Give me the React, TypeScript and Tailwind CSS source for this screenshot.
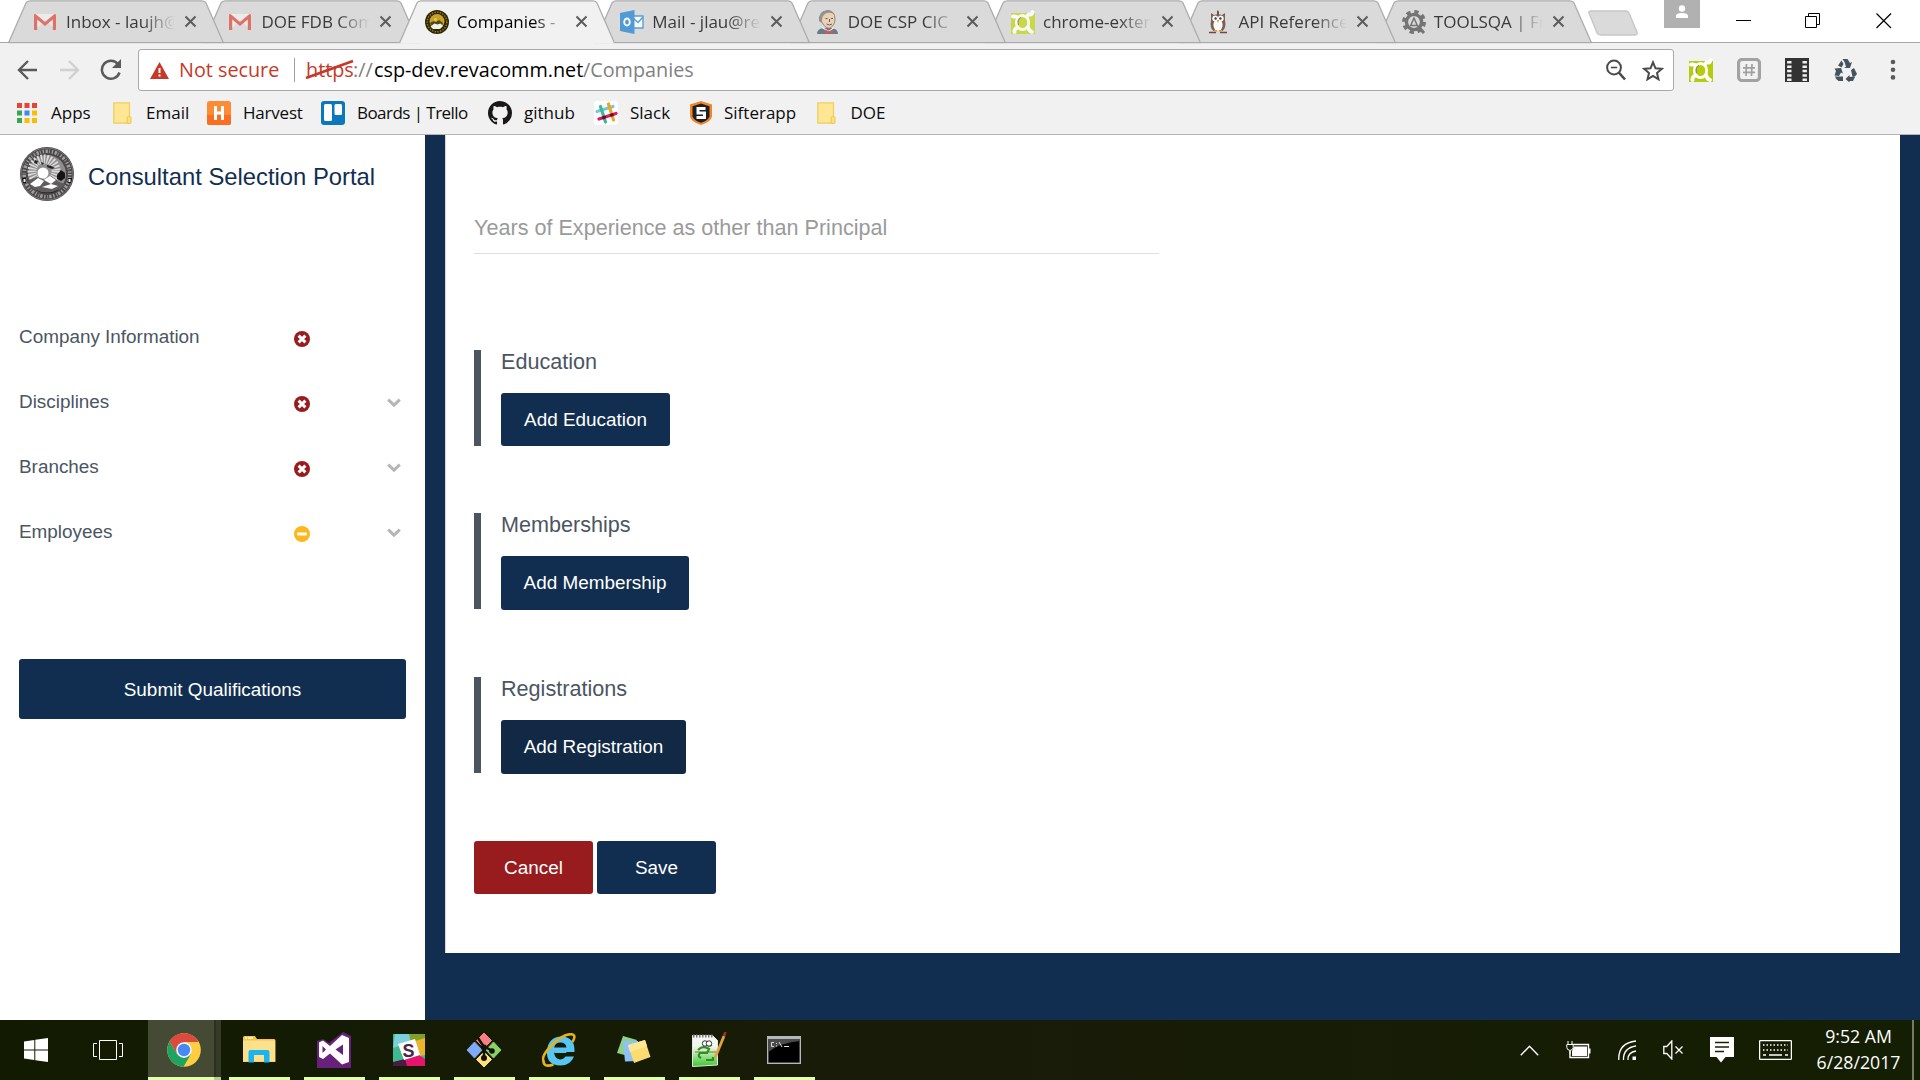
import type { ReactNode } from "react";

/* ---------- tab icons ---------- */

const Gmail = () => (
  <svg width="24" height="24" viewBox="0 0 24 24">
    <path d="M1 4h21v16H1z" fill="#efefef" />
    <path d="M3 18l8.500-8 8.500 8v2H3z" fill="#dcdcdc" />
    <path d="M0 20V5q0-1 1.500-1L11 12 20.500 4Q22 4 22 5v15h-3.200V9.500L11 16 3.200 9.500V20z" fill="#e06055" />
  </svg>
);

const Seal = () => (
  <svg width="24" height="24" viewBox="0 0 24 24">
    <circle cx="12" cy="12" r="12" fill="#2c2608" />
    <circle cx="12" cy="12" r="9.800" fill="none" stroke="#8d7a1c" strokeWidth="1.500" strokeDasharray="1.500 1.200" />
    <circle cx="12" cy="11.500" r="7.500" fill="#c9a227" />
    <path d="M5 13q3-3 6-1l3-2 4 3-2 5H8z" fill="#4e4a1a" />
    <path d="M5.500 16.500l4-3 3 1 3-1 2.500 2.500-3 3H8z" fill="#f2f2ea" />
    <circle cx="10.500" cy="9.500" r="1.500" fill="#e8c84a" />
  </svg>
);

const Outlook = () => (
  <svg width="24" height="24" viewBox="0 0 24 24">
    <path d="M13 6h10v12H13z" fill="#fff" stroke="#3f97d9" strokeWidth="1.400" />
    <path d="M13 8l5 4.500L23 7" fill="none" stroke="#3f97d9" strokeWidth="1.500" />
    <path d="M0 3L14.500 0v24L0 21z" fill="#3a8fd6" />
    <ellipse cx="7" cy="12" rx="2.800" ry="3.500" fill="none" stroke="#fff" strokeWidth="1.900" />
  </svg>
);

const Jenkins = () => (
  <svg width="24" height="24" viewBox="0 0 24 24">
    <path d="M1 24q0-5 6-6h9q6 1 6 6z" fill="#56697a" />
    <path d="M5 9q0-8 7-8.500 7 .5 7 8.500 0 7-6 9.500-7-2.500-8-9.500z" fill="#eccfb2" stroke="#6b5a4e" strokeWidth=".8" />
    <path d="M3 11Q2 1 11 .5q5 0 7 3.500-5-2-8.500-.5Q6.500 5.500 6 9l-.500 4z" fill="#8a8580" />
    <path d="M9.500 8.500h2M15 8.500h2M10.500 14q3 2 5.500 0M13.500 9v3" stroke="#5c4438" strokeWidth="1" fill="none" />
    <path d="M6 17.500l7 4 5-4" fill="none" stroke="#f5f5f5" strokeWidth="1.200" />
    <path d="M9 19.500l4 1.700 4-1.700v4.500l-4-1.500-4 1.500z" fill="#d2413b" />
  </svg>
);

const LimeFrame = ({ fill }: { fill: string }) => (
  <svg width="24" height="24" viewBox="0 0 24 24">
    <path d="M0 3h24v21H0z" fill={fill} />
    <path d="M0 1h24v2.500H0z" fill="none" />
    <path d="M2 6.500Q6 6 8 9M15.500 7.500Q17 4 19 4.500T21.500 2M3.500 22Q3 19 6.500 17.500M21 22Q18 21 17 17" fill="none" stroke="#fff" strokeWidth="3.800" strokeLinecap="round" />
    <ellipse cx="11.500" cy="12.500" rx="6.200" ry="7" fill={fill} stroke="#fff" strokeWidth="2.800" />
    <path d="M7.500 15Q6 9.500 10 7.500" fill="none" stroke="#8c8c50" strokeWidth="1.300" />
  </svg>
);

const Owl = () => (
  <svg width="24" height="24" viewBox="0 0 24 24">
    <path d="M11 0l1.500 1.500L13 0v5h-2z" fill="#5b4334" />
    <path d="M5 3l3 2q4-1.500 8 0l3-2v7q1.500 8-2.500 11h-9Q3.500 18 5 10z" fill="#6b4a3a" />
    <ellipse cx="12" cy="15" rx="4.600" ry="6" fill="#fff" />
    <circle cx="9.200" cy="8.500" r="2.900" fill="#fff" />
    <circle cx="14.800" cy="8.500" r="2.900" fill="#fff" />
    <circle cx="9.600" cy="8.500" r="1.200" fill="#222" />
    <circle cx="14.400" cy="8.500" r="1.200" fill="#222" />
    <path d="M10.800 10h2.400L12 13z" fill="#f08a24" />
    <path d="M3 22.500h7M14 22.500h7" stroke="#4a3a30" strokeWidth="1.600" />
    <path d="M8 20.800h3M13 20.800h3" stroke="#f08a24" strokeWidth="1.800" />
  </svg>
);

const GearA = () => (
  <svg width="24" height="24" viewBox="0 0 24 24">
    <circle cx="12" cy="12" r="10.300" fill="none" stroke="#636363" strokeWidth="3.400" strokeDasharray="4.300 3.790" />
    <circle cx="12" cy="12" r="7.600" fill="none" stroke="#636363" strokeWidth="3.400" />
    <path d="M12 8l-3.300 7.500h6.600z" fill="none" stroke="#636363" strokeWidth="1.500" />
    <path d="M16 16l6 7" stroke="#636363" strokeWidth="3" />
  </svg>
);

type TabInfo = { title: string; icon: ReactNode; layer: string; active?: boolean };

/* Each tab overlaps the one to its right; the active one covers both neighbours. */
const tabs: TabInfo[] = [
  { title: "Inbox - laujh@", icon: <Gmail />, layer: "z-[8]" },
  { title: "DOE FDB Com", icon: <Gmail />, layer: "z-[7]" },
  { title: "Companies -", icon: <Seal />, layer: "z-[9]", active: true },
  { title: "Mail - jlau@re", icon: <Outlook />, layer: "z-[5]" },
  { title: "DOE CSP CIC", icon: <Jenkins />, layer: "z-[4]" },
  { title: "chrome-exten", icon: <LimeFrame fill="#c6d92c" />, layer: "z-[3]" },
  { title: "API Reference", icon: <Owl />, layer: "z-[2]" },
  { title: "TOOLSQA | Fr", icon: <GearA />, layer: "z-[1]" },
];

const Tab = ({ title, icon, layer, active }: TabInfo) => (
  <div className={`relative -mr-[20.600px] flex h-[43px] w-[216px] shrink-0 items-center pl-[26px] ${layer}`}>
    <svg className="absolute inset-0" width="216" height="44" viewBox="0 0 216 44">
      <path d="M0 43.500L18 3Q19 .8 22 .8H194Q197 .8 198 3L216 43.500z" fill={active ? "#f1f1f1" : "#dadada"} />
      <path d="M.5 43L18 3Q19 .8 22 .8H194Q197 .8 198 3L215.500 43" fill="none" stroke="#adadad" strokeWidth="1.300" />
      {!active && <path d="M0 42.500h216" stroke="#a8a8a8" />}
    </svg>
    <span className={`relative mr-2 flex w-6 shrink-0 ${active ? "" : "opacity-85"}`}>{icon}</span>
    <span
      className={`relative w-[112px] overflow-hidden whitespace-nowrap text-[17px] leading-6 [mask-image:linear-gradient(to_right,black_68%,transparent_97%)] ${active ? "text-black" : "text-[#3a3a3a]"}`}
    >
      {title}
    </span>
    <svg className="relative ml-[6px] shrink-0" width="13" height="13" viewBox="0 0 13 13">
      <path d="M1.500 1.500l10 10M11.500 1.500l-10 10" stroke="#5c5c5c" strokeWidth="2" />
    </svg>
  </div>
);

const TabStrip = () => (
  <div className="flex h-[43px] justify-between border-b border-[#a8a8a8] bg-white">
    <div className="isolate flex pl-2">
      {tabs.map((t, i) => (
        <Tab key={i} {...t} />
      ))}
      <svg className="mt-[10px] ml-[15.500px] shrink-0" width="53" height="26" viewBox="0 0 53 26">
        <path d="M2 3Q1 1 4 1H38Q41 1 42 3L50 22Q51 25 48 25H14Q11 25 10 23z" fill="#dadada" stroke="#c6c6c6" strokeWidth="1.300" />
      </svg>
    </div>
    <div className="flex">
      <div className="flex h-7 w-9 justify-center bg-[#b1b1b1]">
        <svg className="mt-[5px]" width="14" height="14" viewBox="0 0 14 14" fill="#fff">
          <circle cx="7" cy="3.500" r="3.200" />
          <path d="M1 13v-2q0-3 6-3t6 3v2z" />
        </svg>
      </div>
      <svg className="ml-9" width="16" height="42" viewBox="0 0 16 42">
        <path d="M0 20.500h15" stroke="#000" />
      </svg>
      <svg className="ml-[53px]" width="16" height="42" viewBox="0 0 16 42" fill="none" stroke="#000">
        <path d="M.5 16.500h11v11H.5zM3.500 16.500v-3h11v11h-3" />
      </svg>
      <svg className="mr-7 ml-[55px]" width="16" height="42" viewBox="0 0 16 42">
        <path d="M.5 13.500l14.500 14.500M15 13.500L.5 28" stroke="#000" strokeWidth="1.200" />
      </svg>
    </div>
  </div>
);

/* ---------- toolbar ---------- */

const Toolbar = () => (
  <div className="flex h-[54px] items-center">
    <svg className="ml-[17px]" width="21" height="22" viewBox="0 0 21 22" fill="none" stroke="#5a5a5a" strokeWidth="2.400">
      <path d="M20 11H2M11 2l-9 9 9 9" />
    </svg>
    <svg className="ml-[21px]" width="21" height="22" viewBox="0 0 21 22" fill="none" stroke="#d0d0d0" strokeWidth="2.400">
      <path d="M1 11h18M10 2l9 9-9 9" />
    </svg>
    <svg className="ml-[20px]" width="22" height="22" viewBox="0 0 22 22">
      <path d="M18 5.200A9 9 0 1 0 19.500 13.500" fill="none" stroke="#5a5a5a" strokeWidth="2.500" />
      <path d="M21 0v9h-9z" fill="#5a5a5a" />
    </svg>
    <div className="ml-[16px] flex h-[42px] w-[1536px] items-center rounded-[3px] border border-[#a9a9a9] bg-white text-[19.800px] whitespace-nowrap">
      <svg className="ml-[11px]" width="19" height="17" viewBox="0 0 19 17">
        <path d="M9.500 0L19 17H0z" fill="#c53929" />
        <path d="M9.500 6v5M9.500 12.500v2" stroke="#fff" strokeWidth="2" />
      </svg>
      <span className="ml-[10px] w-[115px] shrink-0 text-[#c53929]">Not secure</span>
      <span className="mr-[11px] h-6 w-px bg-[#a0a0a0]" />
      <span className="flex">
        <span className="relative w-[47px] text-[#c53929]">
          https
          <svg className="absolute top-[4px] -left-px" width="50" height="22" viewBox="0 0 50 22">
            <path d="M1 19L48 2" stroke="#c53929" strokeWidth="2.800" />
          </svg>
        </span>
        <span className="w-[21px] text-[#808080]">://</span>
        <span className="w-[209px] text-black">csp-dev.revacomm.net</span>
        <span className="text-[#808080]">/Companies</span>
      </span>
      <svg className="ml-auto" width="20" height="22" viewBox="0 0 20 22" fill="none" stroke="#4a4a4a" strokeWidth="2">
        <circle cx="8" cy="8.500" r="6.900" />
        <path d="M12.800 13.500l6.200 7" strokeWidth="2.600" />
        <path d="M4.800 8.500h6.400" strokeWidth="1.600" />
      </svg>
      <svg className="mr-[9px] ml-[16px]" width="22" height="21" viewBox="0 0 22 21">
        <path d="M11 2.300l2.500 6 6.300.5-4.800 4.200 1.500 6.300L11 15.900l-5.500 3.400L7 13 2.200 8.800l6.300-.5z" fill="none" stroke="#4a4a4a" strokeWidth="2" />
      </svg>
    </div>
    <div className="ml-[15px] flex items-center gap-6">
      <LimeFrame fill="#b5cc0c" />
      <svg width="24" height="24" viewBox="0 0 24 24" fill="none">
        <rect x="1.500" y="1.500" width="21" height="21" rx="3.500" fill="#f1f1f1" stroke="#a2a2a2" strokeWidth="3.200" />
        <path d="M9.500 6L9 18M15 6l-.5 12M6 9.800h12M6 14.300h12" stroke="#9f9f9f" strokeWidth="1.700" />
      </svg>
      <svg width="24" height="24" viewBox="0 0 24 24">
        <path d="M0 0h24v24H0z" fill="#333" />
        <path d="M4.300 3V23M19.700 3V23" stroke="#f1f1f1" strokeWidth="4.400" strokeDasharray="2.500 1.900" />
      </svg>
      <svg width="24" height="24" viewBox="0 0 24 24" fill="#46535f">
        <path d="M9.500 1h5l2.500 4 2-1-2 6h-6l2-1.300L11.500 4z" />
        <path d="M8.500 2.500L10.500 6 8.500 9.500 5 7.500z" />
        <path d="M1.500 10.500l6.500-.5 2 5.500-2-1-2 3.500-4.500-.500 1.500-4.500z" />
        <path d="M2 18.500h8V23H5.500Q3 22 2 18.500z" />
        <path d="M18 12l3-2 3 6-2 2.500-2.500.500z" />
        <path d="M22 19l-2 4h-3.500v1.500L12.500 21l4-4v1.800z" />
      </svg>
    </div>
    <svg className="ml-[33px]" width="6" height="22" viewBox="0 0 6 22" fill="#5a5a5a">
      <circle cx="3" cy="3" r="2.300" />
      <circle cx="3" cy="10.700" r="2.300" />
      <circle cx="3" cy="18.400" r="2.300" />
    </svg>
  </div>
);

/* ---------- bookmarks ---------- */

const AppsGrid = () => (
  <svg width="20" height="20" viewBox="0 0 20 20">
    {["#ea4335", "#ea4335", "#ea4335", "#34a853", "#4285f4", "#fbbc05", "#34a853", "#fbbc05", "#fbbc05"].map((c, i) => (
      <rect key={i} x={(i % 3) * 7.5} y={Math.floor(i / 3) * 7.5} width="5" height="5" fill={c} />
    ))}
  </svg>
);

const Folder = () => (
  <svg width="19" height="22" viewBox="0 0 19 22">
    <path d="M.8.8h15.700v20.400H.8z" fill="#ffe694" stroke="#f0d060" strokeWidth="1.300" />
    <path d="M14.200 21.200v-6q2-1.500 3.800 0v6z" fill="#ffe27e" stroke="#ecc84c" />
  </svg>
);

const Harvest = () => (
  <svg width="24" height="24" viewBox="0 0 24 24">
    <rect width="24" height="24" rx="2.500" fill="#fb8c35" />
    <path d="M0 14h24v7.500q0 2.500-2.500 2.500h-19Q0 24 0 21.500z" fill="#f96e22" />
    <path d="M8.500 5v14M15.500 5v14M8.500 12h7" stroke="#fff" strokeWidth="3" />
  </svg>
);

const Trello = () => (
  <svg width="24" height="24" viewBox="0 0 24 24">
    <rect width="24" height="24" rx="3" fill="#0b78bd" />
    <rect x="3" y="3" width="8" height="17" rx="1.500" fill="#fff" />
    <rect x="13.500" y="3" width="7.500" height="11" rx="1.500" fill="#fff" />
  </svg>
);

const Github = () => (
  <svg width="24" height="24" viewBox="0 0 16 16" fill="#191717">
    <path d="M8 0C3.580 0 0 3.580 0 8c0 3.540 2.290 6.530 5.470 7.590.4.070.55-.17.55-.38 0-.19-.01-.82-.01-1.490-2.010.37-2.530-.49-2.690-.94-.09-.23-.48-.94-.82-1.130-.28-.15-.68-.52-.01-.53.63-.01 1.080.58 1.230.82.72 1.210 1.870.87 2.330.66.07-.52.28-.87.51-1.070-1.780-.2-3.640-.89-3.640-3.950 0-.87.31-1.590.82-2.150-.08-.2-.36-1.020.08-2.120 0 0 .67-.21 2.200.82.64-.18 1.320-.27 2-.27s1.360.09 2 .27c1.530-1.040 2.200-.82 2.200-.82.44 1.100.16 1.920.08 2.120.51.56.82 1.270.82 2.150 0 3.070-1.870 3.750-3.650 3.950.29.25.54.73.54 1.480 0 1.070-.01 1.930-.01 2.200 0 .21.15.46.55.38A8.010 8.010 0 0 0 16 8c0-4.420-3.580-8-8-8z" />
  </svg>
);

const SlackHash = () => (
  <svg width="24" height="24" viewBox="0 0 24 24" fill="none" strokeWidth="3.200" strokeLinecap="round">
    <rect width="24" height="24" rx="3" fill="#fff" />
    <path d="M3 10.500L19 5.500" stroke="#70cadb" />
    <path d="M14.500 3l5 16" stroke="#e9a820" />
    <path d="M6.500 5.500L11.500 21" stroke="#3eb991" />
    <path d="M5 18l17-5.500" stroke="#e01765" />
    <path d="M9.500 16.600l1-.3M17.500 14l.8-.2" stroke="#5a1530" />
  </svg>
);

const Sifter = () => (
  <svg width="24" height="24" viewBox="0 0 24 24">
    <path d="M12 0l11 3.500v12Q22 21 12 24 2 21 1 15.500v-12z" fill="#f58426" />
    <path d="M12 2.500l8.500 2.700v10Q19.500 19.500 12 21.800 4.500 19.500 3.500 15.200v-10z" fill="#1c2126" />
    <path d="M16.500 7.500H9v4.500h6.500v4.500H7.500" fill="none" stroke="#fff" strokeWidth="3" />
  </svg>
);

const bookmarks: { label: string; icon: ReactNode; box: string; slot: string; text?: string }[] = [
  { label: "Apps", icon: <AppsGrid />, box: "w-[96px]", slot: "w-[34px]" },
  { label: "Email", icon: <Folder />, box: "w-[94px]", slot: "w-[33px]" },
  { label: "Harvest", icon: <Harvest />, box: "w-[114px]", slot: "w-[36px]", text: "tracking-[-0.200px]" },
  { label: "Boards | Trello", icon: <Trello />, box: "w-[167px]", slot: "w-[36px]", text: "tracking-[-0.550px]" },
  { label: "github", icon: <Github />, box: "w-[106px]", slot: "w-[36px]" },
  { label: "Slack", icon: <SlackHash />, box: "w-[95px]", slot: "w-[36px]" },
  { label: "Sifterapp", icon: <Sifter />, box: "w-[128px]", slot: "w-[35px]" },
  { label: "DOE", icon: <Folder />, box: "w-[80px]", slot: "w-[33.500px]" },
];

const Bookmarks = () => (
  <div className="flex h-[38px] items-center border-b border-[#b4b4b4] pb-[6px] pl-[17px]">
    {bookmarks.map((b) => (
      <div key={b.label} className={`flex shrink-0 items-center whitespace-nowrap text-[17px] leading-6 text-[#0c0c0c] ${b.box}`}>
        <span className={`shrink-0 ${b.slot}`}>{b.icon}</span>
        <span className={b.text ?? ""}>{b.label}</span>
      </div>
    ))}
  </div>
);

/* ---------- page ---------- */

const StateSeal = () => (
  <svg width="54" height="54" viewBox="0 0 54 54">
    <circle cx="27" cy="27" r="27" fill="#4a4848" />
    <circle cx="27" cy="27" r="22.800" fill="none" stroke="#a09e9e" strokeWidth="3.600" strokeDasharray="1.300 1.700 2.300 1.200 .8 2" />
    <circle cx="27" cy="27" r="26" fill="none" stroke="#777" strokeWidth="1" />
    <circle cx="27" cy="27" r="19" fill="#8f8d8d" />
    <circle cx="24" cy="24" r="12" fill="none" stroke="#dcdcdc" strokeWidth="9" strokeDasharray="1.500 1.300" />
    <circle cx="23" cy="26" r="5.500" fill="#fff" />
    <path d="M15 13l3 1-1 3-3-1zM21 15l3 1-2 2zM27 18l4 1 4 2-3 1-5-2z" fill="#222" />
    <path d="M37 28l4-5 4 3v5l-4 3-4-2z" fill="#151515" />
    <path d="M9 33l8-3 8 3 6-4 8 6 6 2-6 6-10 4-12-2-7-6z" fill="#5f5d5d" />
    <path d="M10 37l8-6 6 3-4 5-5 1zM24 33l6-4 6 4-5 4zM22 40l9-3 7 2-6 3z" fill="#fff" />
    <path d="M14 42q13 7 26 0-12 9-26 0z" fill="#222" />
    <path d="M2 31h4v5H3zM48 31h4l-1 5h-3z" fill="#111" />
    <path d="M3.500 32h2v3h-2zM48.500 32h2v3h-2z" fill="#eee" />
  </svg>
);

const ErrorDot = () => (
  <svg width="16" height="16" viewBox="0 0 16 16">
    <circle cx="8" cy="8" r="8" fill="#981b1e" />
    <path d="M4.600 4.600l6.800 6.800M11.400 4.600l-6.800 6.800" stroke="#fff" strokeWidth="3" />
  </svg>
);

const MinusDot = () => (
  <svg width="16" height="16" viewBox="0 0 16 16">
    <circle cx="8" cy="8" r="8" fill="#fdb81e" />
    <rect x="3" y="6.500" width="10" height="3" rx="1" fill="#fff" />
  </svg>
);

const nav = [
  { label: "Company Information", state: "error", open: false },
  { label: "Disciplines", state: "error", open: true },
  { label: "Branches", state: "error", open: true },
  { label: "Employees", state: "partial", open: true },
];

const Sidebar = () => (
  <aside className="flex w-[425px] shrink-0 flex-col bg-white px-[19px] font-['Liberation_Sans',Arial,sans-serif]">
    <div className="mt-[12px] flex h-[54px] items-center pl-px">
      <StateSeal />
      <span className="mt-[5px] ml-[14px] text-[23.800px] leading-7 whitespace-nowrap text-[#112e51]">Consultant Selection Portal</span>
    </div>
    <nav className="mt-[104px]">
      {nav.map((n) => (
        <div key={n.label} className="flex h-[65px] items-center text-[18.900px] text-[#4b5563]">
          <span className="w-[275px]">{n.label}</span>
          <span className="mt-[2px] w-[93px]">{n.state === "error" ? <ErrorDot /> : <MinusDot />}</span>
          {n.open && (
            <svg className="mt-px" width="14" height="10" viewBox="0 0 14 10">
              <path d="M1.200 1.600L7 7.200l5.800-5.600" fill="none" stroke="#b4b6bb" strokeWidth="3" />
            </svg>
          )}
        </div>
      ))}
    </nav>
    <button className="mt-[94px] h-[60px] rounded-[3px] bg-[#112e51] pt-[2px] text-[18.900px] text-white">Submit Qualifications</button>
  </aside>
);

const sections = [
  { title: "Education", action: "Add Education", box: "h-[163px]", tone: "h-[53px] w-[169px] bg-[#112e51]" },
  { title: "Memberships", action: "Add Membership", box: "h-[164px]", tone: "h-[54px] w-[188px] bg-[#112e51]" },
  { title: "Registrations", action: "Add Registration", box: "h-[164px]", tone: "h-[54px] w-[185px] bg-[#112945]" },
];

const Main = () => (
  <main className="flex-1 bg-[#112e51] px-5 font-['Liberation_Sans',Arial,sans-serif]">
    <div className="flex h-[818px] flex-col border-l border-[#d6d7d9] bg-white pl-7">
      <div className="mt-[74px] h-[45px] w-[685px] border-b border-[#e0e0e0] pt-[6px] text-[21.600px] leading-[26px] text-[#9a9a9a]">
        Years of Experience as other than Principal
      </div>
      <div className="mt-[96px]">
        {sections.map((s) => (
          <section key={s.title} className={s.box}>
            <div className="h-[96px] border-l-[7px] border-[#4a5561] pl-5">
              <h2 className="h-[43px] text-[21.600px] leading-[24px] text-[#4b5563]">{s.title}</h2>
              <button className={`rounded-[3px] pt-px text-[18.900px] whitespace-nowrap text-white ${s.tone}`}>{s.action}</button>
            </div>
          </section>
        ))}
      </div>
      <div className="flex gap-1 text-[18.900px] text-white">
        <button className="h-[53px] w-[119px] rounded-[3px] bg-[#981b1e] pt-px">Cancel</button>
        <button className="h-[53px] w-[119px] rounded-[3px] bg-[#112e51] pt-px">Save</button>
      </div>
    </div>
  </main>
);

/* ---------- taskbar ---------- */

const ChromeLogo = () => (
  <svg width="34" height="34" viewBox="0 0 34 34">
    <circle cx="17" cy="17" r="16.800" fill="#ffcd40" />
    <path d="M2.500 8.500A16.800 16.800 0 0 1 31.700 9H17l-7 12z" fill="#db4a3f" />
    <path d="M2.500 8.500A16.800 16.800 0 0 0 16.500 33.800L24 21 17 25 10 21z" fill="#1da362" />
    <circle cx="17" cy="17" r="7.800" fill="#f4f4f4" />
    <circle cx="17" cy="17" r="6.200" fill="#4688f4" />
  </svg>
);

const FileExplorer = () => (
  <svg width="34" height="28" viewBox="0 0 34 28">
    <path d="M1 1.500Q1 0 2.500 0H13l2 3h17q1.500 0 1.500 1.500V26H1z" fill="#f5c546" />
    <path d="M1 4.500h32v21H1z" fill="#fde08b" />
    <path d="M3 2h2M6 2h5" stroke="#fff" strokeWidth="1.400" />
    <path d="M6.500 26.500V16q0-2 2-2h17q2 0 2 2v10.500h-5.500V19H12v7.500z" fill="#1ab5f1" />
  </svg>
);

const VisualStudio = () => (
  <svg width="34" height="36" viewBox="0 0 34 36">
    <path d="M0 9l6-2 6 4L26 0l8 4v32H0z" fill="#68217a" />
    <path d="M2 10.500l4-2 7 5.500L25 3l7 3v24l-7 2.500L13 21.500 6 27l-4-2zM5.500 14v7l3.500-3.500zM26 12.500L18.500 17.500l7.500 5.500z" fill="#fff" fillRule="evenodd" />
  </svg>
);

const SlackApp = () => (
  <svg width="32" height="32" viewBox="0 0 32 32">
    <path d="M0 0h32v32H0z" fill="#3eb991" />
    <path d="M2 0h19l-3 8L0 14z" fill="#7bd0dc" />
    <path d="M16 0h16v5L18 9z" fill="#819f28" />
    <path d="M22 7l10-3v17l-5 1z" fill="#ecb32d" />
    <path d="M11 25l15-4 6 4v7H13z" fill="#e7146d" />
    <path d="M0 28l12-3 2 7H0z" fill="#4d1a45" />
    <path d="M5 10l17-5 5 16-16 5z" fill="#fff" />
    <text x="9.500" y="22.500" fontFamily="Liberation Sans" fontWeight="bold" fontSize="18" fill="#4a2545">S</text>
  </svg>
);

const GitBash = () => (
  <svg width="36" height="36" viewBox="0 0 36 36" strokeLinejoin="round">
    <path d="M18 1l7.500 7.500L18 16l-7.500-7.500z" fill="#f57f85" stroke="#f57f85" />
    <path d="M8.500 10l7.500 8-7.500 8L1 18z" fill="#7faaf5" stroke="#7faaf5" />
    <path d="M27.500 10l7.500 8-7.500 8-7.500-8z" fill="#8cd06a" stroke="#8cd06a" />
    <path d="M18 20l7.500 7.500L18 35l-7.500-7.500z" fill="#ffe07d" stroke="#ffe07d" />
    <path d="M12 6l6 9v11M18 14l8 5" stroke="#14130b" strokeWidth="2.500" fill="none" />
    <circle cx="18" cy="26" r="3" fill="#14130b" />
    <circle cx="26" cy="19" r="2.800" fill="#14130b" />
    <circle cx="18" cy="15.500" r="3" fill="#14130b" />
  </svg>
);

const InternetExplorer = () => (
  <svg width="34" height="35" viewBox="0 0 34 35" fill="none">
    <path d="M8 19h24.500q.8-15-13-15.500Q6 4 5 18t13.500 14.500q10 0 13.500-9h-8.500q-2 3-5.500 3-5.500-.5-6-7.500z" fill="#58c6f3" />
    <path d="M12.200 14.500q1-5 6.300-5t6 5z" fill="#15180a" />
    <path d="M12.300 19.500h12" stroke="#58c6f3" />
    <path d="M30.500 9Q35 1.500 29 1.200 21 1 10 12T1.500 28q0 7 10 3.500" stroke="#e9b217" strokeWidth="2.600" />
  </svg>
);

const StickyNotes = () => (
  <svg width="34" height="28" viewBox="0 0 34 28">
    <path d="M6 0l14 4-5 17-15-4z" fill="#8fd08c" />
    <path d="M6 5h15v20l-13 .5z" fill="#8cc3f4" />
    <path d="M11 9l17-5 5.500 17L17 27z" fill="#fbdc70" />
    <path d="M11 9l17-5 2 6-17 6z" fill="#fde795" />
  </svg>
);

const NotepadPlus = () => (
  <svg width="36" height="36" viewBox="0 0 36 36">
    <defs>
      <linearGradient id="pageGreen" x1="0" y1="0" x2="0" y2="1">
        <stop offset="0.35" stopColor="#f4f6f0" />
        <stop offset="1" stopColor="#3cc82a" />
      </linearGradient>
    </defs>
    <path d="M1.500 3.500h20l5 5v24.500l-25 1.500z" fill="url(#pageGreen)" stroke="#e6e6e6" />
    <path d="M2 4h20" stroke="#777" strokeWidth="3" strokeDasharray="1.500 1.500" />
    <path d="M4 20h22" stroke="#8a8a30" strokeWidth="1.200" />
    <path d="M7 18q5-5 11-1l-2 4H9q-3 3 1 5M17 14l4-1M15 28h7M22 25v4" stroke="#2c8f28" strokeWidth="2.200" fill="none" />
    <circle cx="14" cy="11.500" r="2.700" fill="#fff" stroke="#333" />
    <circle cx="18" cy="11.500" r="2.700" fill="#fff" stroke="#333" />
    <path d="M24 26L33 4" stroke="#e2a33a" strokeWidth="2.800" />
    <path d="M33 4l1.500-4" stroke="#a92d22" strokeWidth="2.500" />
  </svg>
);

const Terminal = () => (
  <svg width="34" height="28" viewBox="0 0 34 28">
    <rect x=".7" y=".7" width="32.600" height="26.600" fill="#000" stroke="#b4b8bb" strokeWidth="1.400" />
    <path d="M1 1h32v2H1z" fill="#b4b8bb" />
    <path d="M1.500 3h31v2Q12 7 1.500 16z" fill="#4b4b4b" />
    <path d="M7 6.500H4.500v4H7M9.500 7v1M9.500 9.500v1M12 6l3 5M17 10.500h5" stroke="#ddd" fill="none" />
  </svg>
);

const apps: ReactNode[] = [
  <FileExplorer />, <VisualStudio />, <SlackApp />, <GitBash />, <InternetExplorer />, <StickyNotes />, <NotepadPlus />, <Terminal />,
];

const Taskbar = () => (
  <footer className="flex h-[60px] shrink-0 bg-linear-to-r from-[#121b02] via-[#181b08] via-50% to-[#141e02] text-white">
    <div className="flex w-[148px] items-center pl-6">
      <svg width="24" height="24" viewBox="0 0 24 24" fill="#fff">
        <path d="M0 3.400l10.300-1.500v9.500H0zM11.300 1.700L24 0v11.400H11.300zM0 12.400h10.300V22L0 20.600zM11.300 12.400H24V24l-12.700-1.800z" />
      </svg>
      <svg className="ml-[45px]" width="30" height="20" viewBox="0 0 30 20" fill="none" stroke="#fff">
        <path d="M6.500.5h17v19h-17zM4 3.500H.5v13H4M26 3.500h3.500v13H26" />
      </svg>
    </div>
    <div className="flex w-[66px] items-center justify-center border-b-[3px] border-[#e2ffa9] bg-[#444a34] pt-[3px] pl-[6px]">
      <ChromeLogo />
    </div>
    <div className="flex w-[7px] flex-col">
      <div className="flex-1 border-l-2 border-[#2b311b] bg-[#343b27]" />
      <div className="h-[3px] bg-[#b5cf8c]" />
    </div>
    <div className="ml-2 flex gap-[14px]">
      {apps.map((a, i) => (
        <div key={i} className="flex w-[61px] items-center justify-center border-b-[3px] border-[#e2ffa9] pt-[3px] pr-[2px]">
          {a}
        </div>
      ))}
    </div>
    <div className="ml-auto flex items-center">
      <svg className="mr-[27px]" width="19" height="11" viewBox="0 0 19 11" fill="none" stroke="#fff" strokeWidth="1.400">
        <path d="M.8 10.200L9.500 1.200l8.700 9" />
      </svg>
      <svg className="mr-[27px]" width="25" height="18" viewBox="0 0 25 18" fill="none" stroke="#fff">
        <path d="M5 3.500h17.500v13H4V10" strokeWidth="1.400" />
        <path d="M8 5.500h13v9.500H6V10z" fill="#fff" stroke="none" />
        <path d="M23.500 7.500v5" strokeWidth="2" />
        <path d="M2 0v3M6 0v3M.8 3.500h6.400v3Q7 9 4 9.500 1 9 .8 6.500zM4 9.500V13" fill="#18200a" />
      </svg>
      <svg className="mr-[26px]" width="19" height="20" viewBox="0 0 19 20" fill="none" stroke="#fff" strokeWidth="1.300">
        <path d="M.8 20Q0 3 18 1M5.500 20Q5 8 18 6M10 20Q9.500 12.500 18 11" />
        <path d="M14.500 16.500h3.500V20h-3.500z" fill="#fff" stroke="none" />
      </svg>
      <svg className="mr-[26px]" width="21" height="20" viewBox="0 0 21 20" fill="none" stroke="#fff" strokeWidth="1.300">
        <path d="M.8 6.500h3l5-5.500v18l-5-5.500h-3zM12.500 6.500l7 7M19.500 6.500l-7 7" />
      </svg>
      <svg className="mr-[25px]" width="24" height="26" viewBox="0 0 24 26">
        <path d="M0 0h24v20h-8.500L11 25.500 6.500 20H0z" fill="#fff" />
        <path d="M5 5.500h14M5 10h14M5 14.500h9" stroke="#18200a" strokeWidth="1.300" />
      </svg>
      <svg width="33" height="20" viewBox="0 0 33 20" fill="none" stroke="#fff">
        <rect x=".6" y=".6" width="31.800" height="18.800" rx="1" strokeWidth="1.300" />
        <path d="M4 5h25M4 10h25" strokeDasharray="1.500 2" strokeWidth="1.300" />
        <path d="M4 15h3M10 15h13M26 15h3" strokeWidth="1.300" />
      </svg>
      <div className="ml-[20px] w-[93px] pb-[2px] text-center text-[17.700px] leading-[26px]">
        <div>9:52 AM</div>
        <div>6/28/2017</div>
      </div>
      <div className="ml-[7px] h-full w-[2px] bg-[#747a66]" />
      <div className="w-[6px]" />
    </div>
  </footer>
);

export default function App() {
  return (
    <div className="flex h-[1080px] w-[1920px] flex-col overflow-hidden bg-white font-['Open_Sans','Noto_Sans',sans-serif]">
      <header className="h-[135px] shrink-0 bg-[#f1f1f1]">
        <TabStrip />
        <Toolbar />
        <Bookmarks />
      </header>
      <div className="flex flex-1">
        <Sidebar />
        <Main />
      </div>
      <Taskbar />
    </div>
  );
}
